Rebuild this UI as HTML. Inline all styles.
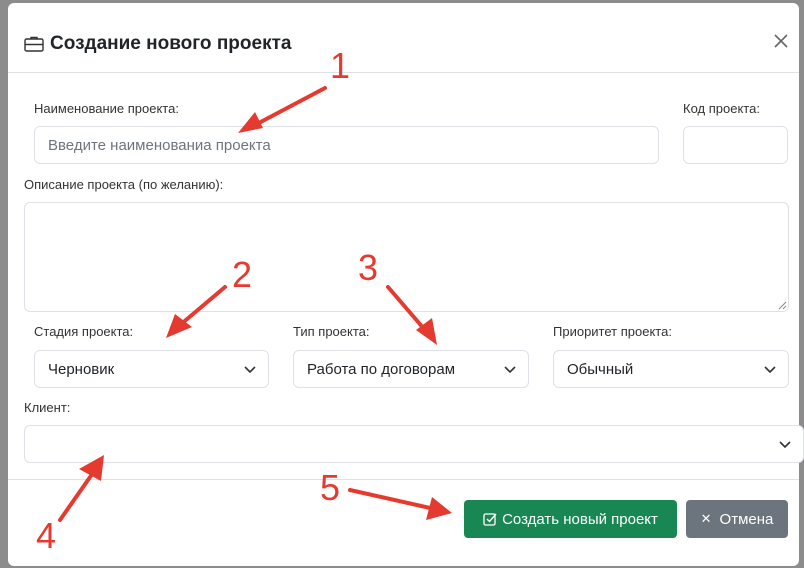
<!DOCTYPE html>
<html><head><meta charset="utf-8"><style>
*{box-sizing:border-box}
body{margin:0;width:804px;height:568px;background:#8c8c8c;font-family:"Liberation Sans",sans-serif;position:relative;overflow:hidden;color:#212529}
.modal{position:absolute;left:8px;top:3px;width:791px;height:563px;background:#fff;border-radius:6px}
.abs{position:absolute}
.lbl{position:absolute;font-size:13px;color:#333}
.inp{position:absolute;border:1px solid #dee2e6;border-radius:6px;background:#fff;font-size:15px;padding-left:13px;display:flex;align-items:center}
.chev{position:absolute;right:12px;top:50%;margin-top:-5px}
.btn{position:absolute;border-radius:4px;color:#fff;font-size:15px;display:flex;align-items:center;justify-content:center}
</style></head><body>
<div class="modal">
 <div class="abs" style="left:16px;top:30px;font-size:19px;font-weight:bold;color:#212529;display:flex;align-items:center">
  <svg width="20" height="18" viewBox="0 0 20 18" style="margin-right:6px"><rect x="1" y="4" width="18" height="12" rx="1.5" fill="none" stroke="#333" stroke-width="1.4"/><path d="M7 4V2.5h6V4M1 9.5h18" fill="none" stroke="#333" stroke-width="1.4"/></svg>Создание нового проекта</div>
 <svg class="abs" style="left:765px;top:30px" width="16" height="16"><path d="M2 2L14 14M14 2L2 14" stroke="#666" stroke-width="1.6"/></svg>
 <div class="abs" style="left:0;top:69px;width:791px;height:1px;background:#dee2e6"></div>
 <div class="abs" style="left:0;top:476px;width:791px;height:1px;background:#dee2e6"></div>
</div>
<div class="lbl" style="left:34px;top:101px">Наименование проекта:</div>
<div class="inp" style="left:34px;top:126px;width:625px;height:38px;color:#6c757d">Введите наименованиа проекта</div>
<div class="lbl" style="left:683px;top:101px">Код проекта:</div>
<div class="inp" style="left:683px;top:126px;width:105px;height:38px"></div>
<div class="lbl" style="left:24px;top:177px">Описание проекта (по желанию):</div>
<div class="inp" style="left:24px;top:202px;width:765px;height:110px"></div>
<svg class="abs" style="left:777px;top:300px" width="10" height="10"><path d="M2 9L9 2M6 9L9 6" stroke="#888" stroke-width="1"/></svg>
<div class="lbl" style="left:34px;top:324px">Стадия проекта:</div>
<div class="lbl" style="left:293px;top:324px">Тип проекта:</div>
<div class="lbl" style="left:553px;top:324px">Приоритет проекта:</div>
<div class="inp" style="left:34px;top:350px;width:235px;height:38px">Черновик<svg class="chev" width="12" height="10"><path d="M1 3l5 5 5-5" fill="none" stroke="#333" stroke-width="1.6"/></svg></div>
<div class="inp" style="left:293px;top:350px;width:236px;height:38px">Работа по договорам<svg class="chev" width="12" height="10"><path d="M1 3l5 5 5-5" fill="none" stroke="#333" stroke-width="1.6"/></svg></div>
<div class="inp" style="left:553px;top:350px;width:236px;height:38px">Обычный<svg class="chev" width="12" height="10"><path d="M1 3l5 5 5-5" fill="none" stroke="#333" stroke-width="1.6"/></svg></div>
<div class="lbl" style="left:24px;top:400px">Клиент:</div>
<div class="inp" style="left:24px;top:425px;width:780px;height:38px"><svg class="chev" width="12" height="10"><path d="M1 3l5 5 5-5" fill="none" stroke="#333" stroke-width="1.6"/></svg></div>
<div class="btn" style="left:464px;top:500px;width:213px;height:38px;background:#198754"><svg width="14" height="14" style="margin-right:5px"><rect x="1" y="2" width="11" height="11" rx="1.5" fill="none" stroke="#fff" stroke-width="1.3"/><path d="M4 7l2.5 2.5L13 2" fill="none" stroke="#fff" stroke-width="1.4"/></svg>Создать новый проект</div>
<div class="btn" style="left:686px;top:500px;width:102px;height:38px;background:#6c757d"><span style="font-size:13px;margin-right:8px">✕</span>Отмена</div>
<svg class="abs" style="left:0;top:0" width="804" height="568">
 <g fill="#e53a2f" font-family="Liberation Sans" font-size="36">
  <text x="330" y="78">1</text><text x="232" y="287">2</text><text x="358" y="280">3</text><text x="36" y="548">4</text><text x="320" y="500">5</text>
 </g>
 <g stroke="#e53a2f" stroke-width="4" stroke-linecap="round">
  <line x1="325" y1="88" x2="255" y2="125"/>
  <line x1="225" y1="287" x2="180" y2="325"/>
  <line x1="388" y1="287" x2="425" y2="330"/>
  <line x1="60" y1="520" x2="95" y2="470"/>
  <line x1="350" y1="490" x2="430" y2="508"/>
 </g>
 <g fill="#e53a2f">
  <polygon points="238,133 255,112 263,128"/>
  <polygon points="166,338 175,314 192,327"/>
  <polygon points="437,345 416,330 432,318"/>
  <polygon points="104,455 101,481 79,469"/>
  <polygon points="452,513 426,520 432,497"/>
 </g>
</svg>
</body></html>
